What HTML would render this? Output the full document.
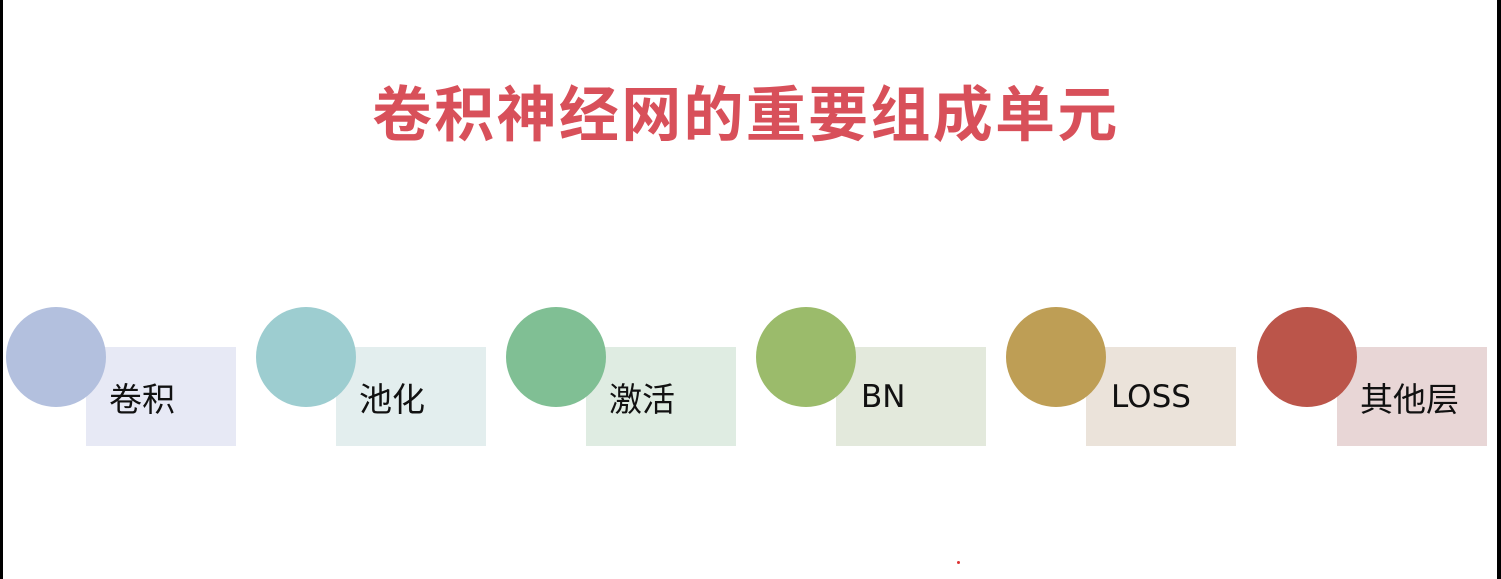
<!DOCTYPE html>
<html><head><meta charset="utf-8"><style>
html,body{margin:0;padding:0;}
body{width:1501px;height:579px;background:#fff;position:relative;overflow:hidden;font-family:"Liberation Sans","Noto Sans CJK SC",sans-serif;}
.bl{position:absolute;left:0;top:0;width:3px;height:579px;background:#000;}
.br{position:absolute;right:0;top:0;width:4px;height:579px;background:#000;}
.title{position:absolute;left:372px;top:79px;font-size:60px;font-weight:bold;color:#d8505a;white-space:nowrap;letter-spacing:2.3px;line-height:64px;font-family:"Noto Sans CJK SC",sans-serif;}
.c{position:absolute;top:307px;width:100px;height:100px;border-radius:50%;z-index:2;}
.r{position:absolute;top:347px;width:150px;height:99px;z-index:1;}
.t{position:absolute;top:376px;font-size:33px;color:#111;z-index:3;line-height:42px;white-space:nowrap;font-family:"Noto Sans CJK SC",sans-serif;}
.dot{position:absolute;left:957px;top:561px;width:3px;height:3px;border-radius:50%;background:#d33;}
</style></head><body>
<div class="bl"></div><div class="br"></div>
<div class="title">卷积神经网的重要组成单元</div>

<div class="r" style="left:86px;background:#e7e9f5"></div><div class="c" style="left:6px;background:#b3c0de"></div><div class="t" style="left:109px">卷积</div>
<div class="r" style="left:336px;background:#e3eeee"></div><div class="c" style="left:256px;background:#9dcdd0"></div><div class="t" style="left:359px">池化</div>
<div class="r" style="left:586px;background:#dfece2"></div><div class="c" style="left:506px;background:#80bf94"></div><div class="t" style="left:609px">激活</div>
<div class="r" style="left:836px;background:#e3e9dc"></div><div class="c" style="left:756px;background:#9bbb6b"></div><div class="t" style="left:861px;font-family:'DejaVu Sans',sans-serif;font-size:31px">BN</div>
<div class="r" style="left:1086px;background:#ebe3da"></div><div class="c" style="left:1006px;background:#be9e55"></div><div class="t" style="left:1111px;font-family:'DejaVu Sans',sans-serif;font-size:31px">LOSS</div>
<div class="r" style="left:1337px;background:#e8d6d6"></div><div class="c" style="left:1257px;background:#bb554a"></div><div class="t" style="left:1360px">其他层</div>
<div class="dot"></div>
</body></html>
